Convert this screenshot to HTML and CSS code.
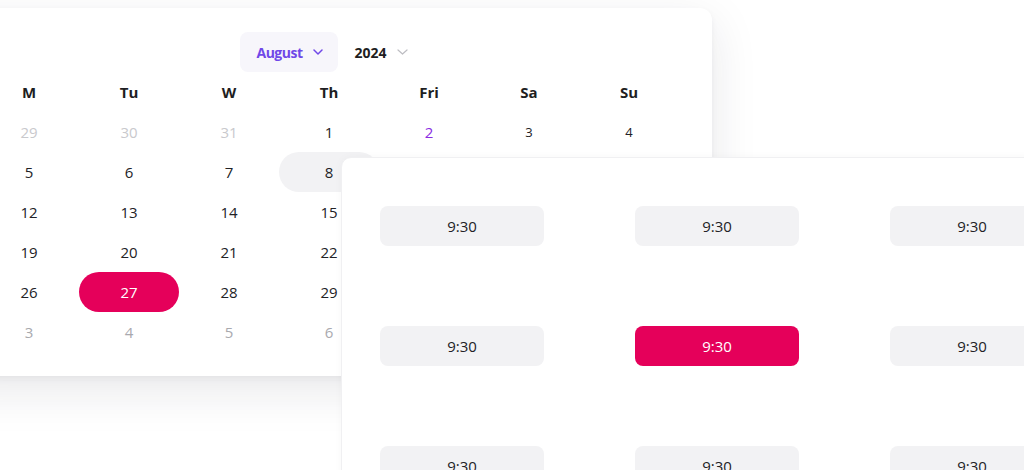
FILE: index.html
```html
<!DOCTYPE html>
<html lang="en">
<head>
<meta charset="utf-8">
<title>Booking calendar</title>
<link rel="stylesheet" href="styles.css">
</head>
<body>
<div class="stage">
  <section class="calendar">
    <div class="cal-head">
      <button class="sel sel-month">August
        <svg class="chev" width="10" height="6" viewBox="0 0 10 6"><polyline points="1,1 5,5 9,1" fill="none" stroke="currentColor" stroke-width="1.5" stroke-linecap="round" stroke-linejoin="round"/></svg>
      </button>
      <button class="sel sel-year">2024
        <svg class="chev chev-grey" width="11" height="6" viewBox="0 0 11 6"><polyline points="1,1 5.5,5 10,1" fill="none" stroke="currentColor" stroke-width="1.2" stroke-linecap="round" stroke-linejoin="round"/></svg>
      </button>
    </div>
    <div class="grid">
      <div class="wd">M</div><div class="wd">Tu</div><div class="wd">W</div><div class="wd">Th</div><div class="wd">Fri</div><div class="wd">Sa</div><div class="wd">Su</div>

      <div class="d prev">29</div><div class="d prev">30</div><div class="d prev">31</div><div class="d">1</div><div class="d today">2</div><div class="d small">3</div><div class="d small">4</div>

      <div class="d">5</div><div class="d">6</div><div class="d">7</div><div class="d hover">8</div><div class="d">9</div><div class="d">10</div><div class="d">11</div>

      <div class="d">12</div><div class="d">13</div><div class="d">14</div><div class="d">15</div><div class="d">16</div><div class="d">17</div><div class="d">18</div>

      <div class="d">19</div><div class="d">20</div><div class="d">21</div><div class="d">22</div><div class="d">23</div><div class="d">24</div><div class="d">25</div>

      <div class="d">26</div><div class="d selected">27</div><div class="d">28</div><div class="d">29</div><div class="d">30</div><div class="d">31</div><div class="d next">1</div>

      <div class="d next">3</div><div class="d next">4</div><div class="d next">5</div><div class="d next">6</div><div class="d next">7</div><div class="d next">8</div><div class="d next">9</div>
    </div>
  </section>

  <section class="times">
    <div class="slots">
      <button class="slot">9:30</button><button class="slot">9:30</button><button class="slot">9:30</button>
      <button class="slot">9:30</button><button class="slot active">9:30</button><button class="slot">9:30</button>
      <button class="slot">9:30</button><button class="slot">9:30</button><button class="slot">9:30</button>
    </div>
  </section>
</div>
</body>
</html>
```

FILE: styles.css
```css
html, body {
  margin: 0;
  padding: 0;
  background: #ffffff;
}

body {
  width: 1024px;
  height: 470px;
  overflow: hidden;
  font-family: "Open Sans", "Noto Sans", sans-serif;
  color: #222226;
}

.stage {
  position: relative;
  width: 1024px;
  height: 470px;
  padding-top: 8px;
  box-sizing: border-box;
}

.calendar {
  width: 700px;
  margin-left: -54px;
  padding: 24px 33px 24px 33px;
  background: #fff;
  border-radius: 12px;
  box-shadow: 0 14px 48px rgba(30, 30, 50, 0.10), 0 3px 6px rgba(30, 30, 50, 0.05);
}

.cal-head {
  display: flex;
  justify-content: center;
  height: 40px;
  padding-left: 6px;
}

.sel {
  display: flex;
  align-items: center;
  gap: 10px;
  height: 40px;
  padding: 0 16px;
  border: 0;
  border-radius: 8px;
  background: transparent;
  font-family: inherit;
  font-size: 14px;
  font-weight: 700;
  color: #1e1e22;
}

.sel-month {
  background: #f7f6fb;
  color: #7048e8;
  gap: 11px;
  padding: 0 15px 0 16px;
  letter-spacing: -0.5px;
}

.chev-grey {
  color: #bdbdc2;
}

.grid {
  display: grid;
  grid-template-columns: repeat(7, 100px);
  grid-auto-rows: 40px;
}

.wd {
  display: flex;
  align-items: center;
  justify-content: center;
  font-size: 15px;
  font-weight: 700;
  color: #1e1e22;
  padding-bottom: 1px;
}

.d {
  display: flex;
  align-items: center;
  justify-content: center;
  font-size: 15px;
  color: #222226;
  border-radius: 20px;
  padding-bottom: 1px;
}

.d.prev {
  color: #c9c9cd;
}

.d.next {
  color: #a9a9ae;
}

.d.today {
  color: #8a2be2;
}

.d.small {
  font-size: 13px;
}

.d.hover {
  background: #f2f2f4;
}

.d.selected {
  background: #e5005a;
  color: #ffffff;
}

.times {
  position: absolute;
  left: 341px;
  top: 157px;
  width: 760px;
  height: 400px;
  background: #ffffff;
  border: 1px solid #f0f0f2;
  border-radius: 10px;
  box-shadow: 0 0 10px rgba(30, 30, 50, 0.03);
}

.slots {
  display: grid;
  grid-template-columns: repeat(3, 164px);
  grid-auto-rows: 40px;
  column-gap: 91px;
  row-gap: 80px;
  padding: 48px 0 0 38px;
}

.slot {
  border: 0;
  border-radius: 8px;
  background: #f2f2f4;
  font-family: inherit;
  font-size: 15px;
  color: #222226;
}

.slot.active {
  background: #e5005a;
  color: #ffffff;
}
```
